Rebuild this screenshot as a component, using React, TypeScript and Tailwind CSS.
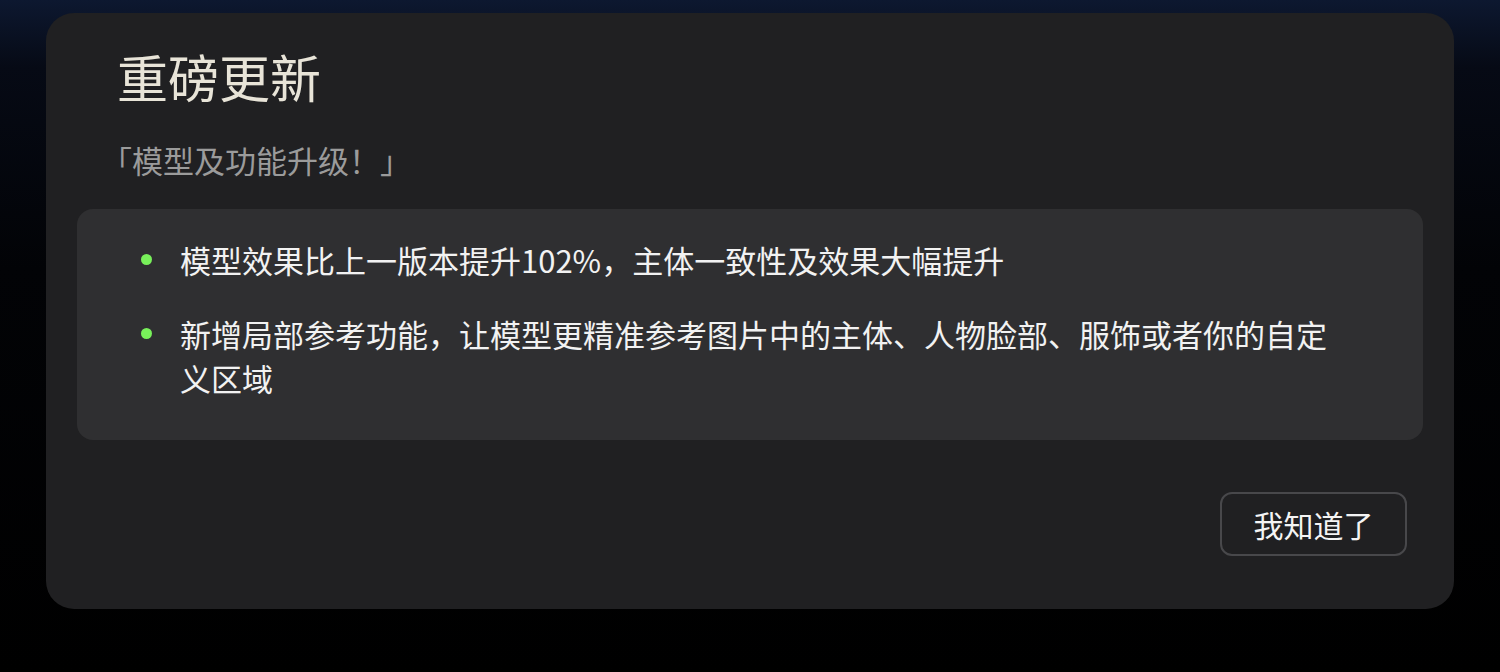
export default function App() {
  const items = [
    "模型效果比上一版本提升102%，主体一致性及效果大幅提升",
    "新增局部参考功能，让模型更精准参考图片中的主体、人物脸部、服饰或者你的自定义区域",
  ];

  return (
    <div
      className="h-[672px] w-full overflow-hidden pt-[13px] px-[46px] bg-[linear-gradient(to_bottom,#0d1830_0%,#060a15_10%,#020306_40%,#000000_100%)]"
      style={{ fontFamily: '"Noto Sans CJK SC", "Noto Sans", sans-serif' }}
    >
      <div className="rounded-[28px] bg-[#202022] pt-[33px] px-[31px] pb-[53px] flex flex-col">
        <h1 className="pl-[40px] text-[51px] leading-[60px] font-normal text-[#e8e4d8]">重磅更新</h1>
        <p className="mt-[33px] pl-[24px] text-[31px] leading-[42px] text-[#9b9b9b]">「模型及功能升级！」</p>

        <div className="mt-[28px] rounded-[16px] bg-[#2f2f31] pt-[29px] pb-[40px] pl-[64px] pr-[80px] flex flex-col gap-[30px]">
          {items.map((t) => (
            <div key={t} className="flex items-start gap-[28px]">
              <span className="mt-[16px] h-[11px] w-[11px] shrink-0 rounded-full bg-[#78f05a]" />
              <span className="max-w-[1160px] text-[31px] leading-[44px] text-[#f2f2f2]">{t}</span>
            </div>
          ))}
        </div>

        <div className="mt-[52px] mr-[16px] flex justify-end">
          <button className="box-border h-[64px] w-[187px] rounded-[12px] border-2 border-[#48484b] text-[30px] leading-[40px] text-[#f4f4f4]">
            我知道了
          </button>
        </div>
      </div>
    </div>
  );
}
